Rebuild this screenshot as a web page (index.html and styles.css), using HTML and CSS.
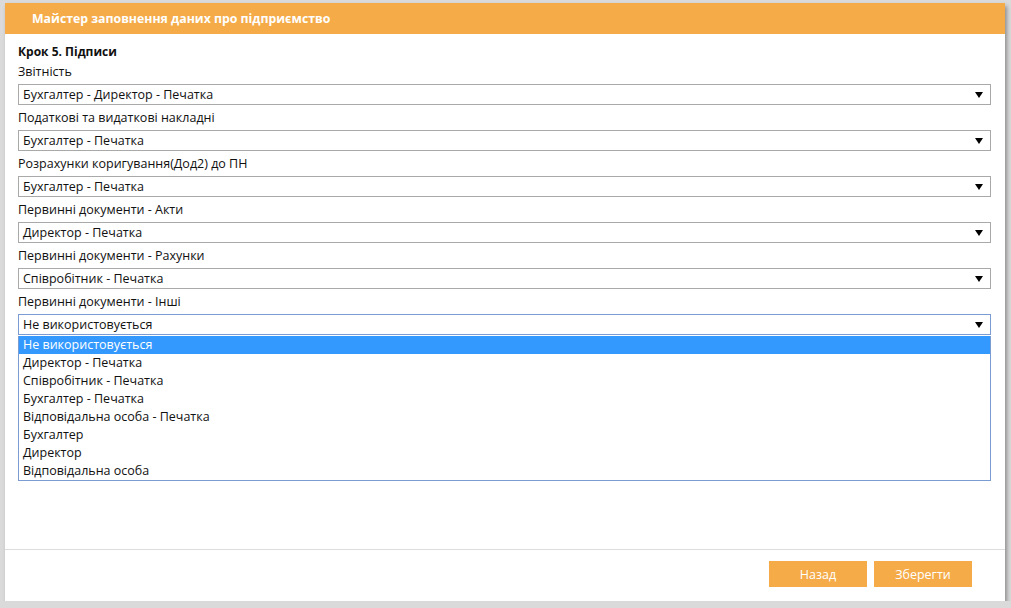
FILE: index.html
```html
<!DOCTYPE html>
<html lang="uk">
<head>
  <meta charset="UTF-8" />
  <title>Майстер заповнення даних про підприємство</title>
  <link rel="stylesheet" href="styles.css">
</head>
<body>

<div class="dialog">
  <div class="dialog-head">Майстер заповнення даних про підприємство</div>

  <div class="dialog-body">
    <div class="step">Крок 5. Підписи</div>

    <div class="field">
      <div class="label">Звітність</div>
      <div class="select"><span>Бухгалтер - Директор - Печатка</span><svg class="arrow" width="8" height="6" viewBox="0 0 8 6"><path d="M0 0H8L4 6Z"/></svg></div>
    </div>

    <div class="field">
      <div class="label">Податкові та видаткові накладні</div>
      <div class="select"><span>Бухгалтер - Печатка</span><svg class="arrow" width="8" height="6" viewBox="0 0 8 6"><path d="M0 0H8L4 6Z"/></svg></div>
    </div>

    <div class="field">
      <div class="label">Розрахунки коригування(Дод2) до ПН</div>
      <div class="select"><span>Бухгалтер - Печатка</span><svg class="arrow" width="8" height="6" viewBox="0 0 8 6"><path d="M0 0H8L4 6Z"/></svg></div>
    </div>

    <div class="field">
      <div class="label">Первинні документи - Акти</div>
      <div class="select"><span>Директор - Печатка</span><svg class="arrow" width="8" height="6" viewBox="0 0 8 6"><path d="M0 0H8L4 6Z"/></svg></div>
    </div>

    <div class="field">
      <div class="label">Первинні документи - Рахунки</div>
      <div class="select"><span>Співробітник - Печатка</span><svg class="arrow" width="8" height="6" viewBox="0 0 8 6"><path d="M0 0H8L4 6Z"/></svg></div>
    </div>

    <div class="field open">
      <div class="label">Первинні документи - Інші</div>
      <div class="select focused"><span>Не використовується</span><svg class="arrow" width="8" height="6" viewBox="0 0 8 6"><path d="M0 0H8L4 6Z"/></svg></div>
      <ul class="options">
        <li class="selected">Не використовується</li>
        <li>Директор - Печатка</li>
        <li>Співробітник - Печатка</li>
        <li>Бухгалтер - Печатка</li>
        <li>Відповідальна особа - Печатка</li>
        <li>Бухгалтер</li>
        <li>Директор</li>
        <li>Відповідальна особа</li>
      </ul>
    </div>
  </div>

  <div class="dialog-foot">
    <button class="btn">Назад</button>
    <button class="btn">Зберегти</button>
  </div>
</div>

</body>
</html>
```

FILE: styles.css
```css
body {
  margin: 0;
  background: #dadada;
  font-family: "Open Sans", "Noto Sans", sans-serif;
  font-size: 12.5px;
  color: #111;
}

.dialog {
  margin: 3px 0 0 5px;
  width: 1000px;
  height: 598px;
  background: #fff;
  box-shadow: 2px 3px 4px rgba(0, 0, 0, 0.35);
  display: flex;
  flex-direction: column;
}

.dialog-head {
  height: 31px;
  line-height: 31px;
  background: #f4ab48;
  color: #fff;
  font-weight: bold;
  font-size: 12.3px;
  padding-left: 27px;
}

.dialog-body {
  flex: 1;
  padding: 9px 14px 0 13px;
}

.step {
  font-weight: bold;
  font-size: 12px;
  line-height: 18px;
  margin-bottom: 1px;
}

.field { position: relative; }

.label {
  line-height: 20px;
  margin-bottom: 2px;
}

.select {
  height: 19px;
  border: 1px solid #a9a9a9;
  margin-bottom: 3px;
  display: flex;
  align-items: center;
  justify-content: space-between;
  padding: 0 7px 0 4px;
}
.select.focused { border-color: #7a9cd3; }
.arrow { fill: #000; }

.options {
  position: absolute;
  left: 0;
  right: 0;
  top: 44px;
  margin: 0;
  padding: 0;
  list-style: none;
  background: #fff;
  border: 1px solid #7a9cd3;
  border-top: none;
}
.options li {
  height: 18px;
  line-height: 18px;
  padding-left: 4px;
}
.options li.selected { background: #3399ff; color: #fff; }

.dialog-foot {
  height: 52px;
  border-top: 1px solid #ddd;
  display: flex;
  justify-content: flex-end;
  align-items: flex-start;
  gap: 7px;
  padding: 11px 33px 0 0;
  box-sizing: border-box;
}

.btn {
  width: 98px;
  height: 26px;
  border: none;
  background: #f4ab48;
  color: #fff;
  font-family: inherit;
  font-size: 12.5px;
}
```
